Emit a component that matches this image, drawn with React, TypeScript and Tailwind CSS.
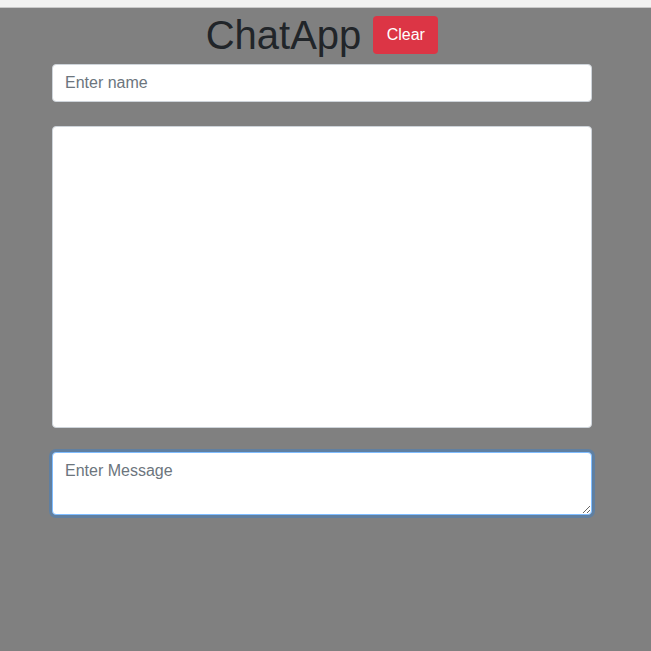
import { useState } from "react";

function App() {
  const [name, setName] = useState("");
  const [message, setMessage] = useState("");

  return (
    <div className="min-h-screen bg-[#808080] font-['Liberation_Sans',Arial,sans-serif]">
      <div className="h-[8px] bg-[#f2f2f1] border-b border-[#c9c9c9]"></div>
      <div className="flex flex-col pl-[52px] pr-[59px]">
        <div className="flex items-center justify-center gap-3 mt-[3px] mb-[5px]">
          <h1 className="text-[40px] leading-[48px] text-[#212529]">ChatApp</h1>
          <button className="h-[38px] w-[65px] rounded bg-[#dc3545] text-white text-base leading-6">
            Clear
          </button>
        </div>
        <input
          type="text"
          value={name}
          onChange={(e) => setName(e.target.value)}
          placeholder="Enter name"
          className="h-[38px] px-3 rounded bg-white border border-[#ced4da] text-base text-[#495057] placeholder:text-[#6c757d] outline-none"
        />
        <div className="mt-6 h-[302px] rounded bg-white border border-[#ced4da]"></div>
        <textarea
          autoFocus
          rows={2}
          value={message}
          onChange={(e) => setMessage(e.target.value)}
          placeholder="Enter Message"
          className="mt-6 h-[63px] px-3 py-1.5 rounded bg-white border border-[#80bdff] text-base leading-6 text-[#495057] placeholder:text-[#6c757d] outline-none ring-[3px] ring-[#007bff]/25"
        ></textarea>
      </div>
    </div>
  );
}

export default App;
